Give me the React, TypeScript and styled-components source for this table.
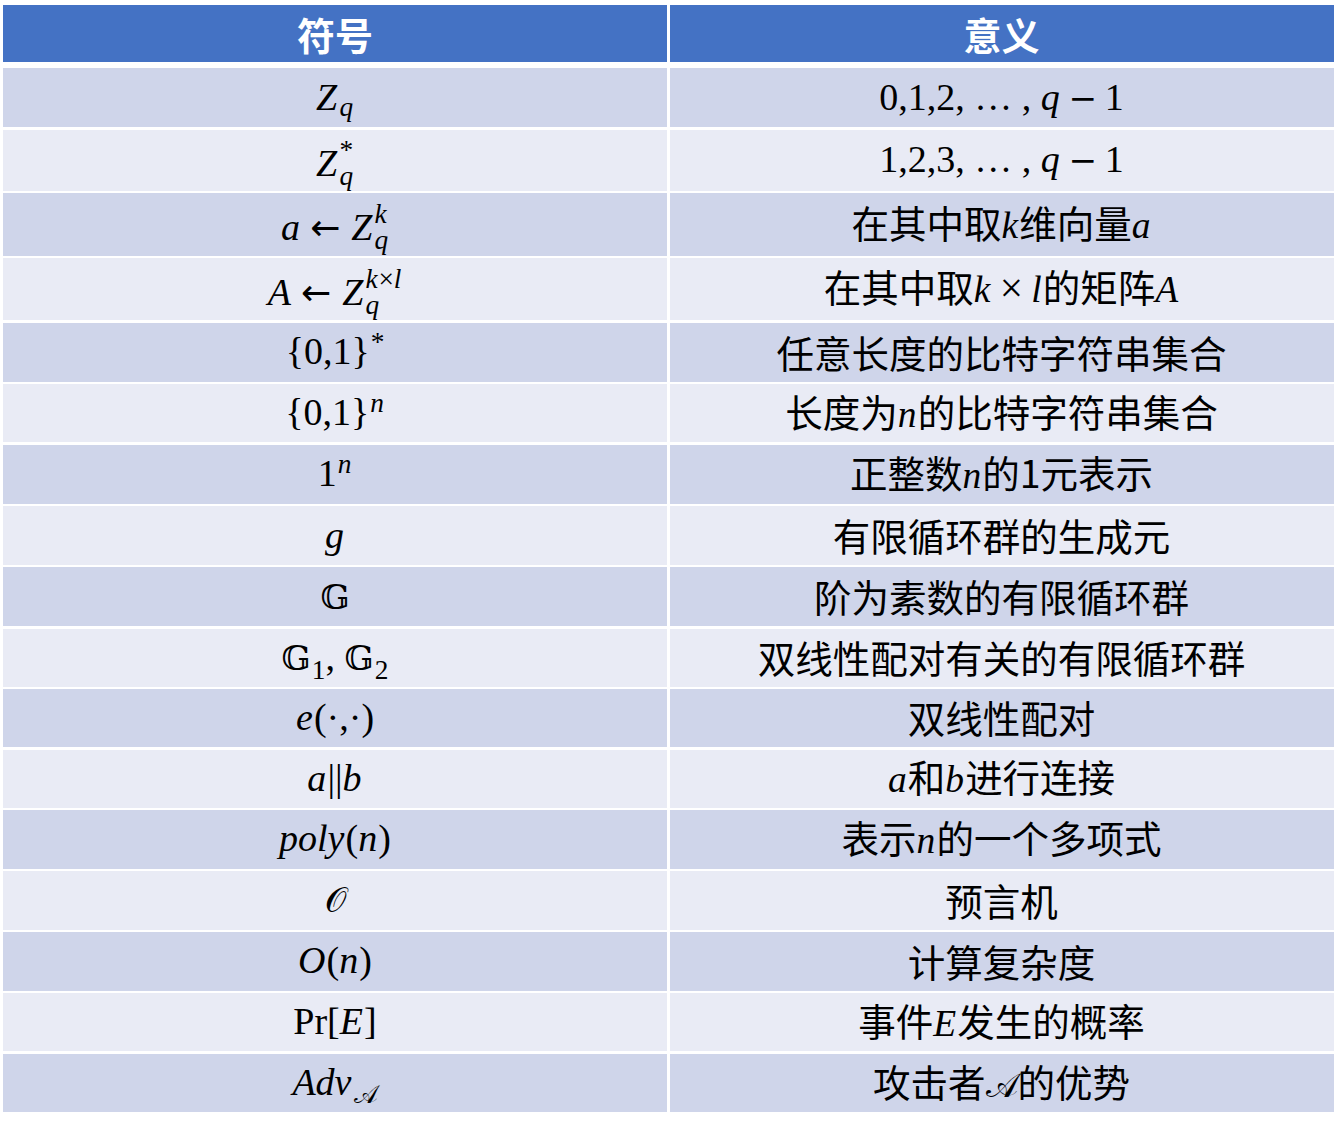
import React from "react";
import styled, { createGlobalStyle } from "styled-components";

const Global = createGlobalStyle`
  html, body {
    margin: 0;
    padding: 0;
    background: #ffffff;
  }
`;

const Page = styled.div`
  padding: 5px 0 0 3px;
  width: 1340px;
  height: 1128px;
  box-sizing: border-box;
`;

const Table = styled.div`
  display: flex;
  flex-direction: column;
  gap: 2.5px;
  width: 1330.5px;
`;

const Row = styled.div<{ $h: number; $gapAfter?: number }>`
  display: grid;
  grid-template-columns: 664px 664px;
  column-gap: 2.5px;
  height: ${({ $h }) => $h}px;
  margin-bottom: ${({ $gapAfter }) => $gapAfter || 0}px;
`;

const HeadCell = styled.div`
  background: #4472c4;
  color: #ffffff;
  display: flex;
  align-items: center;
  justify-content: center;
  font-family: "Noto Sans CJK SC", "Noto Sans", sans-serif;
  font-weight: 700;
  font-size: 38px;
  line-height: 1;
`;

const Cell = styled.div<{ $dark: boolean }>`
  background: ${({ $dark }) => ($dark ? "#cfd5ea" : "#e9ebf5")};
  color: #000000;
  display: flex;
  align-items: center;
  justify-content: center;
  font-size: 37px;
  line-height: 1;
  white-space: nowrap;
  padding-bottom: 2px;
  box-sizing: border-box;
`;

const MathText = styled.span`
  font-family: "Liberation Serif", "DejaVu Serif", serif;
  font-size: 38px;
  line-height: 1;
`;

const Zh = styled.span`
  font-family: "Noto Sans CJK SC", "Noto Sans", sans-serif;
  font-size: 37.5px;
  font-weight: 400;
  line-height: 1;
`;

const I = styled.i`
  font-family: "Liberation Serif", "DejaVu Serif", serif;
  font-style: italic;
  margin-right: 0.03em;
`;

const Op = styled.span`
  font-family: "Liberation Serif", serif;
  font-size: 1.1em;
  margin: 0 0.2em;
`;

const Minus = styled.span`
  font-family: "DejaVu Sans", sans-serif;
  font-size: 0.9em;
  margin: 0 0.22em;
`;

const Arrow = styled.span`
  display: inline-block;
  font-family: "DejaVu Sans", sans-serif;
  font-size: 0.95em;
  margin: 0 0.3em 0 0.25em;
`;

const Ds = styled.span`
  font-family: "DejaVu Serif", "DejaVu Sans", serif;
  font-size: 0.9em;
`;

const Scr = styled.span`
  font-family: "DejaVu Sans", "Liberation Serif", serif;
  font-size: 0.9em;
`;

const Sup = styled.sup`
  font-size: 0.72em;
  vertical-align: 0.5em;
  line-height: 0;
  margin-left: 1px;
`;

const Sub = styled.sub<{ $drop?: number }>`
  font-size: 0.72em;
  vertical-align: ${({ $drop }) => -($drop ?? 0.25)}em;
  line-height: 0;
  margin-left: 1px;
`;

const Stack = styled.span`
  display: inline-flex;
  flex-direction: column;
  align-items: flex-start;
  font-size: 0.72em;
  line-height: 0.95;
  vertical-align: 0.6em;
  margin-left: 1px;
  margin-bottom: -0.9em;
`;

type RowData = { h: number; sym: React.ReactNode; meaning: React.ReactNode };

const rows: RowData[] = [
  {
    h: 59.3,
    sym: (
      <MathText>
        <I>Z</I>
        <Sub>
          <I>q</I>
        </Sub>
      </MathText>
    ),
    meaning: (
      <MathText>
        0,1,2, … , <I>q</I>
        <Minus>−</Minus>1
      </MathText>
    ),
  },
  {
    h: 61,
    sym: (
      <MathText>
        <I>Z</I>
        <Stack>
          <span>*</span>
          <I>q</I>
        </Stack>
      </MathText>
    ),
    meaning: (
      <MathText>
        1,2,3, … , <I>q</I>
        <Minus>−</Minus>1
      </MathText>
    ),
  },
  {
    h: 62.7,
    sym: (
      <MathText>
        <I>a</I>
        <Arrow>←</Arrow>
        <I>Z</I>
        <Stack>
          <I>k</I>
          <I>q</I>
        </Stack>
      </MathText>
    ),
    meaning: (
      <Zh>
        在其中取<I>k</I>维向量<I>a</I>
      </Zh>
    ),
  },
  {
    h: 62,
    sym: (
      <MathText>
        <I>A</I>
        <Arrow>←</Arrow>
        <I>Z</I>
        <Stack>
          <span>
            <I>k</I>×<I>l</I>
          </span>
          <I>q</I>
        </Stack>
      </MathText>
    ),
    meaning: (
      <Zh>
        在其中取<I>k</I>
        <Op>×</Op>
        <I>l</I>的矩阵<I>A</I>
      </Zh>
    ),
  },
  {
    h: 59,
    sym: (
      <MathText>
        {"{0,1}"}
        <Sup>*</Sup>
      </MathText>
    ),
    meaning: <Zh>任意长度的比特字符串集合</Zh>,
  },
  {
    h: 58,
    sym: (
      <MathText>
        {"{0,1}"}
        <Sup>
          <I>n</I>
        </Sup>
      </MathText>
    ),
    meaning: (
      <Zh>
        长度为<I>n</I>的比特字符串集合
      </Zh>
    ),
  },
  {
    h: 58.7,
    sym: (
      <MathText>
        1
        <Sup>
          <I>n</I>
        </Sup>
      </MathText>
    ),
    meaning: (
      <Zh>
        正整数<I>n</I>的1元表示
      </Zh>
    ),
  },
  {
    h: 58.7,
    sym: (
      <MathText>
        <I>g</I>
      </MathText>
    ),
    meaning: <Zh>有限循环群的生成元</Zh>,
  },
  {
    h: 58.7,
    sym: (
      <MathText>
        <Ds>𝔾</Ds>
      </MathText>
    ),
    meaning: <Zh>阶为素数的有限循环群</Zh>,
  },
  {
    h: 58,
    sym: (
      <MathText>
        <Ds>𝔾</Ds>
        <Sub $drop={0.35}>1</Sub>, <Ds>𝔾</Ds>
        <Sub $drop={0.35}>2</Sub>
      </MathText>
    ),
    meaning: <Zh>双线性配对有关的有限循环群</Zh>,
  },
  {
    h: 58,
    sym: (
      <MathText>
        <I>e</I>(·,·)
      </MathText>
    ),
    meaning: <Zh>双线性配对</Zh>,
  },
  {
    h: 58.3,
    sym: (
      <MathText>
        <I>a</I>||<I>b</I>
      </MathText>
    ),
    meaning: (
      <Zh>
        <I>a</I>和<I>b</I>进行连接
      </Zh>
    ),
  },
  {
    h: 58.3,
    sym: (
      <MathText>
        <I>poly</I>(<I>n</I>)
      </MathText>
    ),
    meaning: (
      <Zh>
        表示<I>n</I>的一个多项式
      </Zh>
    ),
  },
  {
    h: 58.7,
    sym: (
      <MathText>
        <Scr>𝒪</Scr>
      </MathText>
    ),
    meaning: <Zh>预言机</Zh>,
  },
  {
    h: 58.3,
    sym: (
      <MathText>
        <I>O</I>(<I>n</I>)
      </MathText>
    ),
    meaning: <Zh>计算复杂度</Zh>,
  },
  {
    h: 58.3,
    sym: (
      <MathText>
        Pr[<I>E</I>]
      </MathText>
    ),
    meaning: (
      <Zh>
        事件<I>E</I>发生的概率
      </Zh>
    ),
  },
  {
    h: 58.3,
    sym: (
      <MathText>
        <I>Adv</I>
        <Sub $drop={0.3}>
          <Scr>𝒜</Scr>
        </Sub>
      </MathText>
    ),
    meaning: (
      <Zh>
        攻击者<Scr>𝒜</Scr>的优势
      </Zh>
    ),
  },
];

export default function App() {
  return (
    <Page>
      <Global />
      <Table>
        <Row $h={57} $gapAfter={3.5}>
          <HeadCell>符号</HeadCell>
          <HeadCell>意义</HeadCell>
        </Row>
        {rows.map((r, i) => (
          <Row key={i} $h={r.h}>
            <Cell $dark={i % 2 === 0}>{r.sym}</Cell>
            <Cell $dark={i % 2 === 0}>{r.meaning}</Cell>
          </Row>
        ))}
      </Table>
    </Page>
  );
}
